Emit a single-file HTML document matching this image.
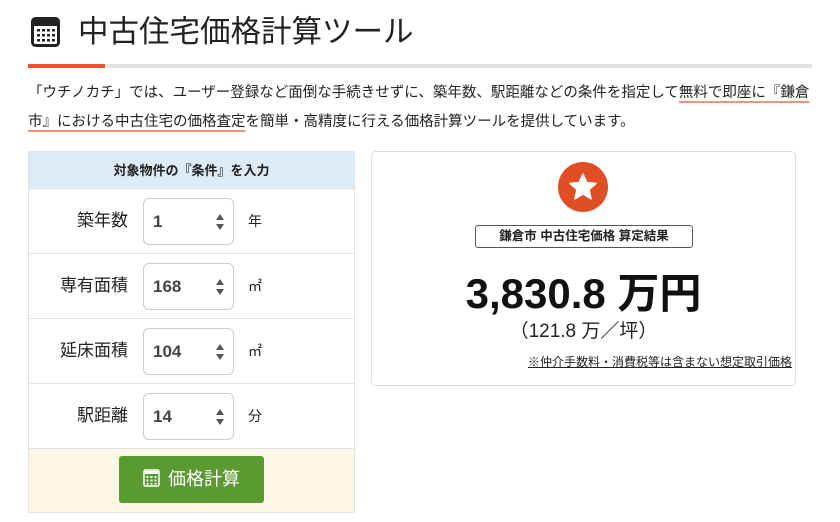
<!DOCTYPE html>
<html><head><meta charset="utf-8"><style>
*{box-sizing:border-box;margin:0;padding:0}
body{width:840px;height:522px;background:#fff;font-family:"Liberation Sans","Noto Sans CJK JP",sans-serif;color:#222;position:relative;overflow:hidden}
.abs{position:absolute}
h1{position:absolute;left:78px;top:12px;font-size:30.5px;font-weight:normal;line-height:40px;color:#222;white-space:nowrap}
.bar{left:28px;top:64px;width:784px;height:4px;background:#e2e2e2}
.bar i{display:block;width:77px;height:4px;background:#e05a2e}
.p{left:28px;top:79px;width:790px;font-size:14.5px;line-height:29px;color:#222}
.u{text-decoration:underline;text-decoration-color:#f0937a;text-decoration-thickness:2px;text-underline-offset:4px}
.form{left:28px;top:151px;width:327px;border:1px solid #e2e2e2}
.hd{height:37px;background:#dcebf5;font-size:13px;font-weight:bold;text-align:center;line-height:37px;border-bottom:1px solid #e2e2e2}
.row{height:65px;border-bottom:1px solid #e2e2e2;position:relative}
.row .l{position:absolute;right:226px;top:0;line-height:64px;font-size:17px;white-space:nowrap}
.row .in{position:absolute;left:114px;top:9px;width:91px;height:47px;border:1px solid #ccc;border-radius:6px;font-size:17px;font-weight:bold;color:#444;line-height:45px;padding-left:9px}
.row .in:after{content:"";position:absolute;right:9px;top:15px;border:4px solid transparent;border-bottom:6px solid #555;border-top:0}
.row .in:before{content:"";position:absolute;right:9px;top:25px;border:4px solid transparent;border-top:6px solid #555;border-bottom:0}
.row .un{position:absolute;left:219px;top:0;line-height:64px;font-size:14px}
.btnarea{height:63px;background:#fbf7e4;position:relative}
.btn{position:absolute;left:90px;top:7px;width:145px;height:47px;background:#5b9a33;border-radius:3px;color:#fff;font-size:18px;line-height:47px;text-align:center}
.res{left:371px;top:151px;width:425px;height:235px;border:1px solid #ddd;border-radius:5px}
</style></head><body>
<svg class="abs" style="left:31px;top:17px" width="29" height="30" viewBox="0 0 29 30"><rect x="1.5" y="1.5" width="26" height="27" rx="3" fill="none" stroke="#222" stroke-width="3"/><rect x="3" y="3" width="23" height="6" fill="#222"/><g fill="#222"><rect x="6" y="12" width="3" height="2.5"/><rect x="11" y="12" width="3" height="2.5"/><rect x="16" y="12" width="3" height="2.5"/><rect x="21" y="12" width="3" height="2.5"/><rect x="6" y="17" width="3" height="2.5"/><rect x="11" y="17" width="3" height="2.5"/><rect x="16" y="17" width="3" height="2.5"/><rect x="21" y="17" width="3" height="2.5"/><rect x="6" y="22" width="3" height="2.5"/><rect x="11" y="22" width="3" height="2.5"/><rect x="16" y="22" width="3" height="2.5"/><rect x="21" y="22" width="3" height="2.5"/></g></svg>
<h1>中古住宅価格計算ツール</h1>
<div class="abs bar"><i></i></div>
<div class="abs p">「ウチノカチ」では、ユーザー登録など面倒な手続きせずに、築年数、駅距離などの条件を指定して<span class="u">無料で即座に『鎌倉市』における中古住宅の価格査定</span>を簡単・高精度に行える価格計算ツールを提供しています。</div>
<div class="abs form">
<div class="hd">対象物件の『条件』を入力</div>
<div class="row"><span class="l">築年数</span><div class="in">1</div><span class="un">年</span></div>
<div class="row"><span class="l">専有面積</span><div class="in">168</div><span class="un">㎡</span></div>
<div class="row"><span class="l">延床面積</span><div class="in">104</div><span class="un">㎡</span></div>
<div class="row"><span class="l">駅距離</span><div class="in">14</div><span class="un">分</span></div>
<div class="btnarea"><div class="btn"><svg width="17" height="18" viewBox="0 0 17 18" style="vertical-align:-2px;margin-right:8px"><rect x="1" y="1" width="15" height="16" rx="1.5" fill="none" stroke="#fff" stroke-width="1.5"/><rect x="2" y="2" width="13" height="3" fill="#fff"/><g fill="#fff"><rect x="3.5" y="7" width="2" height="2"/><rect x="7.5" y="7" width="2" height="2"/><rect x="11.5" y="7" width="2" height="2"/><rect x="3.5" y="10.5" width="2" height="2"/><rect x="7.5" y="10.5" width="2" height="2"/><rect x="11.5" y="10.5" width="2" height="2"/><rect x="3.5" y="14" width="2" height="1.5"/><rect x="7.5" y="14" width="2" height="1.5"/><rect x="11.5" y="14" width="2" height="1.5"/></g></svg>価格計算</div></div>
</div>
<div class="abs res">
<svg class="abs" style="left:186px;top:10px" width="50" height="50" viewBox="0 0 50 50"><circle cx="25" cy="25" r="25" fill="#e04e26"/><path d="M25 12 L28.8 20.6 L38 21.4 L31 27.6 L33.1 36.8 L25 32 L16.9 36.8 L19 27.6 L12 21.4 L21.2 20.6Z" fill="#fff" stroke="#fff" stroke-width="1.5" stroke-linejoin="round"/></svg>
<div class="abs" style="left:103px;top:73px;width:218px;height:23px;border:1px solid #555;border-radius:3px;font-size:12.5px;font-weight:bold;text-align:center;line-height:21px">鎌倉市 中古住宅価格 算定結果</div>
<div class="abs" style="left:0;top:116px;width:423px;text-align:center;font-size:42px;font-weight:bold;line-height:52px;color:#111">3,830.8 万円</div>
<div class="abs" style="left:0;top:167px;width:423px;text-align:center;font-size:19px;line-height:26px">（121.8 万／坪）</div>
<div class="abs" style="right:3px;top:202px;font-size:12px;text-decoration:underline;line-height:16px">※仲介手数料・消費税等は含まない想定取引価格</div>
</div>
</body></html>
